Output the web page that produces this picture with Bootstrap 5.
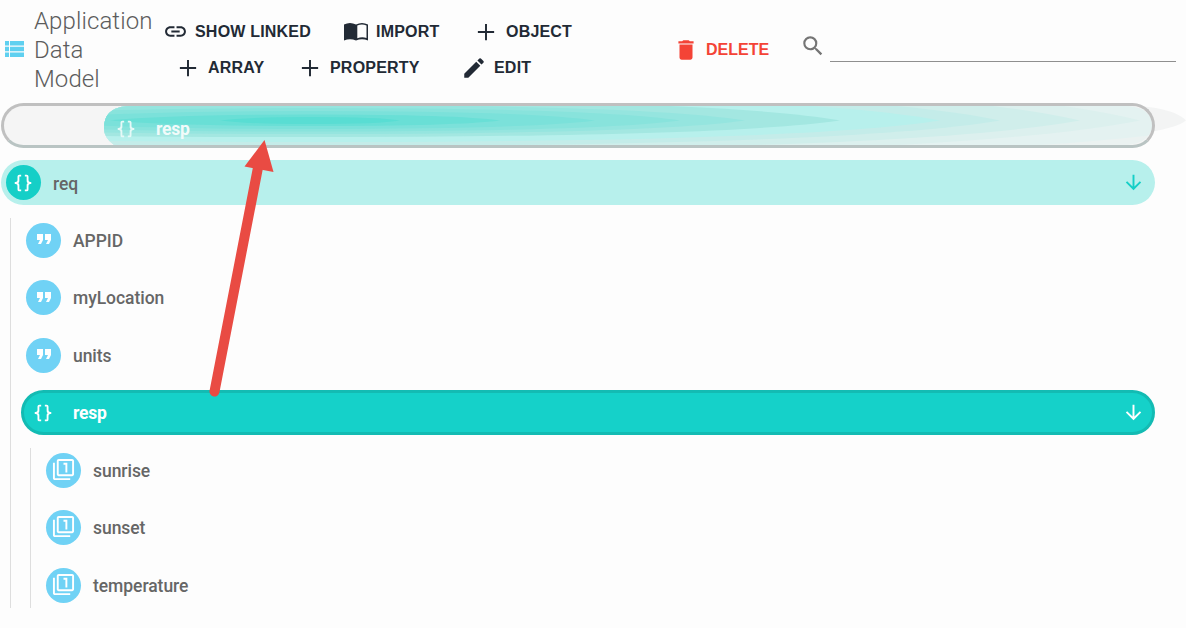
<!DOCTYPE html>
<html lang="en">
<head>
<meta charset="utf-8">
<title>Application Data Model</title>
<link href="https://cdn.jsdelivr.net/npm/bootstrap@5.3.0/dist/css/bootstrap.min.css" rel="stylesheet">
<style>
body{background:#fdfdfd;font-family:Roboto,sans-serif;height:628px;overflow:hidden}
svg{display:block;flex:none;fill:currentColor}
.topbar{height:103px;padding:0 10px 0 5px}
.app-title{font-size:24px;line-height:29px;font-weight:300;letter-spacing:.1px;color:#5c5c5c;width:119px;margin:-3px 5px 0 10px}
.title-icon{color:#5fd0f0}
.actions{width:450px;margin:-4px 0 0 5px}
.line{display:grid;height:36px;align-items:center}
.line1{grid-template-columns:180px 130px 1fr}
.line2{grid-template-columns:122px 164px 1fr;padding-left:12px}
.act{display:flex;align-items:center;border:0;background:none;padding:0;color:#222a35;font:700 16px/20px "Liberation Sans",sans-serif;letter-spacing:.2px;white-space:nowrap;text-transform:uppercase}
.act svg{margin-right:7px}
.act.danger{color:#f44336;margin:-4px 0 0 60px;letter-spacing:0}
.find{color:#757575;margin:-12px 0 0 31px}
.find-field{border:0;border-bottom:1px solid #8f8f8f;background:none;height:30px;margin:-9px 0 0 4px;outline:0;min-width:0}
.tree{margin-left:1px;width:1154px}
.node{height:45px;margin-bottom:12.45px;border-radius:23px;padding-left:5px;color:#666;font-size:17.5px;font-weight:500;letter-spacing:-.05px}
.node-text{padding-top:1.5px}
.ico{width:35px;height:35px;border-radius:50%;margin-right:12px;flex:none;color:#fff}
.ico svg{margin:0 1px 0 0}
.blue{background:#70d2f5}
.blue svg{margin:-2px 0 0}
.teal{background:#15cfc7}
.node-req{background:#b7f0ec}
.node-sel{background:#15d1c9;border:3px solid #13bbb3;color:#fff;font-weight:700;padding-left:2px;letter-spacing:-.2px}
.node-sel .ico{background:none}
.go{margin-left:auto;margin-right:10px;color:#15cfc7}
.node-sel .go{color:#fff;margin-right:7px}
.kids{border-left:1px solid #dedede;margin-left:9px;padding-left:10px}
.kids>:last-child,.kids .kids>:last-child{margin-bottom:0}
.node-drop{background:#f5f5f5;position:relative}
.node-drop::after{content:"";position:absolute;inset:0;border:3px solid #c0c0c0;border-bottom-color:#b9c4c3;border-radius:23px}
.ghost{position:absolute;left:103px;top:3px;overflow:visible}
.ghost-label{position:absolute;left:108px;top:3px;color:#f1fbfa;font-weight:700;height:45px;letter-spacing:-.2px}
.ghost-label .ico{color:#e6f9f7}
.arrow{position:absolute;left:200px;top:135px}
</style>
</head>
<body>
<svg width="0" height="0" class="position-absolute">
<symbol id="plus" viewBox="0 0 24 24"><path d="M11.1 4.500h1.800v6.600h6.600v1.800h-6.600v6.600h-1.800v-6.600H4.500v-1.800h6.600z"/></symbol>
<symbol id="link" viewBox="0 0 24 24"><path d="M3.900 12c0-1.710 1.390-3.100 3.100-3.100h4V7H7c-2.760 0-5 2.240-5 5s2.240 5 5 5h4v-1.900H7c-1.710 0-3.100-1.390-3.100-3.100zM8 13h8v-2H8v2zm9-6h-4v1.900h4c1.710 0 3.100 1.390 3.100 3.100s-1.390 3.100-3.100 3.100h-4V17h4c2.760 0 5-2.240 5-5s-2.240-5-5-5z"/></symbol>
<symbol id="braces" viewBox="0 0 24 24"><path d="M8 3a2 2 0 0 0-2 2v4a2 2 0 0 1-2 2H3v2h1a2 2 0 0 1 2 2v4a2 2 0 0 0 2 2h2v-2H8v-5a2 2 0 0 0-2-2 2 2 0 0 0 2-2V5h2V3M16 3a2 2 0 0 1 2 2v4a2 2 0 0 0 2 2h1v2h-1a2 2 0 0 0-2 2v4a2 2 0 0 1-2 2h-2v-2h2v-5a2 2 0 0 1 2-2 2 2 0 0 1-2-2V5h-2V3z"/></symbol>
<symbol id="quote" viewBox="0 0 24 24"><path d="M6 17h3l2-4V7H5v6h3zm8 0h3l2-4V7h-6v6h3z"/></symbol>
<symbol id="one" viewBox="0 0 24 24"><path d="M3 5H1v16c0 1.100.9 2 2 2h16v-2H3V5zm11 10h2V5h-4v2h2v8zm7-14H7c-1.100 0-2 .9-2 2v14c0 1.100.9 2 2 2h14c1.100 0 2-.9 2-2V3c0-1.100-.9-2-2-2zm0 16H7V3h14v14z"/></symbol>
<symbol id="down" viewBox="0 0 24 24"><path d="M20 12l-1.410-1.410L13 16.170V4h-2v12.170l-5.580-5.590L4 12l8 8 8-8z"/></symbol>
</svg>

<header class="topbar d-flex align-items-center">
  <svg class="title-icon" width="19" height="16" viewBox="0 0 19 16" style="margin-top:-6px"><path d="M0 0h4v4.600H0zM5 0h14v4.600H5zM0 5.700h4v4.600H0zM5 5.700h14v4.600H5zM0 11.400h4V16H0zM5 11.400h14V16H5z"/></svg>
  <h1 class="app-title">Application Data Model</h1>
  <div class="actions">
    <div class="line line1">
      <button class="act"><svg width="25" height="25"><use href="#link"/></svg>Show linked</button>
      <button class="act"><svg width="26" height="20" viewBox="0 0 26 20"><path d="M1 2.500Q7-.5 13 2.500Q19-.5 25 2.500V18.500Q19 16 13 18.500Q7 16 1 18.500zM14.300 3.500V16.300Q19 14.500 23.500 16V3.500Q19 1.700 14.300 3.500z" fill-rule="evenodd"/></svg>Import</button>
      <button class="act"><svg width="26" height="26"><use href="#plus"/></svg>Object</button>
    </div>
    <div class="line line2">
      <button class="act"><svg width="26" height="26"><use href="#plus"/></svg>Array</button>
      <button class="act"><svg width="26" height="26"><use href="#plus"/></svg>Property</button>
      <button class="act"><svg width="26" height="26" viewBox="0 0 24 24"><path d="M3 17.250V21h3.750L17.810 9.940l-3.750-3.750L3 17.250zM20.710 7.040a1 1 0 0 0 0-1.410l-2.340-2.340a1 1 0 0 0-1.410 0l-1.830 1.830 3.750 3.750 1.830-1.830z"/></svg>Edit</button>
    </div>
  </div>
  <button class="act danger"><svg width="26" height="26" viewBox="0 0 24 24"><path d="M6 19c0 1.100.9 2 2 2h8c1.100 0 2-.9 2-2V7H6v12zM19 4h-3.500l-1-1h-5l-1 1H5v2h14V4z"/></svg>Delete</button>
  <svg class="find" width="26" height="26" viewBox="0 0 24 24"><path d="M15.500 14h-.79l-.28-.27A6.471 6.471 0 0 0 16 9.500 6.500 6.500 0 1 0 9.500 16c1.610 0 3.090-.59 4.230-1.570l.27.28v.79l5 4.990L20.490 19l-4.990-5zm-6 0C7.010 14 5 11.990 5 9.500S7.010 5 9.500 5 14 7.010 14 9.500 11.990 14 9.500 14z"/></svg>
  <input class="find-field flex-grow-1" type="text" aria-label="Search">
</header>

<main class="tree">
  <div class="node node-drop">
    <svg class="ghost" width="1082" height="41" viewBox="104 106 1082 41">
      <clipPath id="pill"><path d="M127 106H1128Q1152 108 1152 126Q1150 143 1128 145H114Q104 138 104 128Q104 108 127 106z"/></clipPath>
      <path d="M1140 106Q1175 109 1186 120.500Q1178 127 1150 132z" fill="#f3f4f4"/>
      <g id="bands" clip-path="url(#pill)"></g>
    </svg>
    <div class="ghost-label d-flex align-items-center"><span class="ico d-flex align-items-center justify-content-center"><svg width="22" height="22"><use href="#braces"/></svg></span><span class="node-text">resp</span></div>
  </div>
  <div class="node node-req d-flex align-items-center"><span class="ico teal d-flex align-items-center justify-content-center"><svg width="22" height="22"><use href="#braces"/></svg></span><span class="node-text">req</span><svg class="go" width="24" height="24" viewBox="0 0 24 24"><use href="#down" x="1" y="0" width="23" height="23"/></svg></div>
  <div class="kids">
    <div class="node d-flex align-items-center"><span class="ico blue d-flex align-items-center justify-content-center"><svg width="24" height="24"><use href="#quote"/></svg></span><span class="node-text">APPID</span></div>
    <div class="node d-flex align-items-center"><span class="ico blue d-flex align-items-center justify-content-center"><svg width="24" height="24"><use href="#quote"/></svg></span><span class="node-text">myLocation</span></div>
    <div class="node d-flex align-items-center"><span class="ico blue d-flex align-items-center justify-content-center"><svg width="24" height="24"><use href="#quote"/></svg></span><span class="node-text">units</span></div>
    <div class="node node-sel d-flex align-items-center"><span class="ico d-flex align-items-center justify-content-center"><svg width="22" height="22"><use href="#braces"/></svg></span><span class="node-text">resp</span><svg class="go" width="24" height="24" viewBox="0 0 24 24"><use href="#down" x="1" y="0" width="23" height="23"/></svg></div>
    <div class="kids">
      <div class="node d-flex align-items-center"><span class="ico blue d-flex align-items-center justify-content-center"><svg width="23" height="23"><use href="#one"/></svg></span><span class="node-text">sunrise</span></div>
      <div class="node d-flex align-items-center"><span class="ico blue d-flex align-items-center justify-content-center"><svg width="23" height="23"><use href="#one"/></svg></span><span class="node-text">sunset</span></div>
      <div class="node d-flex align-items-center"><span class="ico blue d-flex align-items-center justify-content-center"><svg width="23" height="23"><use href="#one"/></svg></span><span class="node-text">temperature</span></div>
    </div>
  </div>
</main>

<svg class="arrow" width="80" height="270" viewBox="200 135 80 270"><path d="M214.500 391.500L258.500 165" stroke="#e94b43" stroke-width="10" stroke-linecap="round"/><path d="M264.500 140L273.500 172L244.500 166.500z" fill="#e94b43"/></svg>

<script>
// fading bands of the dragged item: colour, left tip, right tip, top, bottom
const bands = [
  ['#ebf2f1',-1400,1400,60,170],['#e4f2f1',-1200,1250,66,163],['#dcf0ee',-1000,1140,74,157],
  ['#d0eeeb',-800,1080,81,151],['#c4ece9',-600,1000,88,146],['#b7f0ec',-450,940,94,142],
  ['#a3e7e1',-300,840,100,137],['#95e5df',-180,745,105,134],['#88e3dc',-80,680,108,131.5],
  ['#7be1da',20,595,111,129],['#69dfd6',110,500,114.500,126],['#59ddd3',220,400,117,124]];
document.getElementById('bands').innerHTML = bands.map(([c,l,r,t,b]) => {
  const q = 310 + (r-310)*.78, p = 310 - (310-l)*.7;
  return `<path fill="${c}" d="M${l} 120.500Q${p} ${t} 310 ${t}Q${q} ${t} ${r} 120.500Q${q} ${b} 310 ${b}Q${p} ${b} ${l} 120.500z"/>`;
}).join('');
</script>
<script src="https://cdn.jsdelivr.net/npm/bootstrap@5.3.0/dist/js/bootstrap.bundle.min.js"></script>
</body>
</html>
